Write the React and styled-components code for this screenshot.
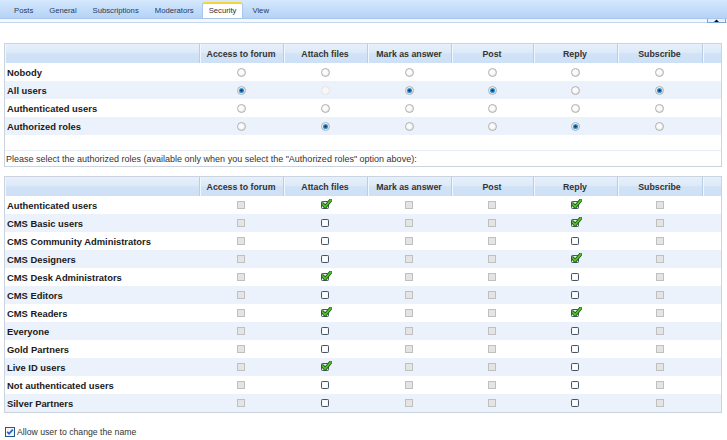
import React from 'react';
import styled, { createGlobalStyle, css } from 'styled-components';

const GlobalStyle = createGlobalStyle`
  html, body {
    margin: 0;
    padding: 0;
    background: #fff;
  }
  body {
    font-family: "Liberation Sans", Arial, sans-serif;
    color: #222;
  }
`;

const TABS = ['Posts', 'General', 'Subscriptions', 'Moderators', 'Security', 'View'];
const COLUMNS = ['Access to forum', 'Attach files', 'Mark as answer', 'Post', 'Reply', 'Subscribe'];
const COL_WIDTHS = [84, 84, 84, 82, 84, 85];

const ACCESS = [
  { name: 'Nobody', values: ['off', 'off', 'off', 'off', 'off', 'off'] },
  { name: 'All users', values: ['on', 'disabled', 'on', 'on', 'off', 'on'] },
  { name: 'Authenticated users', values: ['off', 'off', 'off', 'off', 'off', 'off'] },
  { name: 'Authorized roles', values: ['off', 'on', 'off', 'off', 'on', 'off'] },
];

const ROLES = [
  { name: 'Authenticated users', attach: true, reply: true },
  { name: 'CMS Basic users', attach: false, reply: true },
  { name: 'CMS Community Administrators', attach: false, reply: false },
  { name: 'CMS Designers', attach: false, reply: true },
  { name: 'CMS Desk Administrators', attach: true, reply: false },
  { name: 'CMS Editors', attach: false, reply: false },
  { name: 'CMS Readers', attach: true, reply: true },
  { name: 'Everyone', attach: false, reply: false },
  { name: 'Gold Partners', attach: false, reply: false },
  { name: 'Live ID users', attach: true, reply: false },
  { name: 'Not authenticated users', attach: false, reply: false },
  { name: 'Silver Partners', attach: false, reply: false },
];

const roleStates = role => [
  'disabled',
  role.attach ? 'checked' : 'empty',
  'disabled',
  'disabled',
  role.reply ? 'checked' : 'empty',
  'disabled',
];

const Radio = ({ state }) => {
  if (state === 'disabled') {
    return (
      <IconSvg width="9" height="9" viewBox="0 0 9 9">
        <circle cx="4.5" cy="4.5" r="4" fill="#f7f7f7" stroke="#e5e5e5" />
      </IconSvg>
    );
  }
  return (
    <IconSvg width="9" height="9" viewBox="0 0 9 9">
      <circle cx="4.5" cy="4.5" r="4" fill="#e6e6e6" stroke="#b3b3b3" />
      <circle cx="4.2" cy="4.2" r="2.7" fill="#fbfbfb" />
      {state === 'on' && (
        <>
          <circle cx="4.5" cy="4.5" r="2.6" fill="#3597dc" />
          <circle cx="4.5" cy="4.5" r="1.3" fill="#0c3a68" />
        </>
      )}
    </IconSvg>
  );
};

const Check = ({ state }) => {
  if (state === 'disabled') {
    return (
      <IconSvg width="8" height="8" viewBox="0 0 8 8">
        <rect x="0.5" y="0.5" width="7" height="7" fill="#e4e4e4" stroke="#c0c0c0" />
      </IconSvg>
    );
  }
  if (state === 'empty') {
    return (
      <IconSvg width="8" height="8" viewBox="0 0 8 8">
        <rect x="0.5" y="0.5" width="7" height="7" rx="0.8" fill="#e9ecf0" stroke="#485565" />
        <rect x="1.5" y="1.5" width="5" height="5" fill="#fff" />
      </IconSvg>
    );
  }
  return (
    <IconSvg width="11" height="10" viewBox="0 0 11 10" $shift>
      <rect x="0.5" y="2.5" width="7" height="7" rx="0.8" fill="#e9ecf0" stroke="#485565" />
      <path d="M1.6 5 L4.2 7.8 L9.9 1" fill="none" stroke="#1e5a12" strokeWidth="3.4" strokeLinejoin="round" strokeLinecap="round" />
      <path d="M1.6 5 L4.2 7.8 L9.9 1" fill="none" stroke="#52c52d" strokeWidth="1.7" strokeLinejoin="round" strokeLinecap="round" />
    </IconSvg>
  );
};

const PermissionHead = () => (
  <>
    <colgroup>
      <col style={{ width: 194 }} />
      {COL_WIDTHS.map((w, i) => (
        <col key={i} style={{ width: w }} />
      ))}
      <col />
    </colgroup>
    <thead>
      <tr>
        <HeadCell $first />
        {COLUMNS.map(c => (
          <HeadCell key={c}>{c}</HeadCell>
        ))}
        <HeadCell />
      </tr>
    </thead>
  </>
);

const App = () => {
  return (
    <Page>
      <GlobalStyle />
      <TabBar>
        {TABS.map(tab => (
          <Tab key={tab} $active={tab === 'Security'}>
            {tab}
          </Tab>
        ))}
      </TabBar>
      <TabStrip>
        <ScrollButton>
          <svg width="7" height="4" viewBox="0 0 7 4">
            <path d="M0.5 3.5 L3.5 0.5 L6.5 3.5 Z" fill="#111" />
          </svg>
        </ScrollButton>
      </TabStrip>

      <Content>
        <Panel>
          <Grid>
            <PermissionHead />
            <tbody>
              {ACCESS.map((row, i) => (
                <Row key={row.name} $alt={i % 2 === 1}>
                  <LabelCell>{row.name}</LabelCell>
                  {row.values.map((v, j) => (
                    <Cell key={j}>
                      <Radio state={v} />
                    </Cell>
                  ))}
                  <Cell />
                </Row>
              ))}
              <tr>
                <SpacerCell colSpan={8} />
              </tr>
              <tr>
                <NoteCell colSpan={8}>
                  Please select the authorized roles (available only when you select the "Authorized roles" option above):
                </NoteCell>
              </tr>
            </tbody>
          </Grid>
        </Panel>

        <Panel $gap>
          <Grid>
            <PermissionHead />
            <tbody>
              {ROLES.map((role, i) => (
                <Row key={role.name} $alt={i % 2 === 1}>
                  <LabelCell>{role.name}</LabelCell>
                  {roleStates(role).map((s, j) => (
                    <Cell key={j}>
                      <Check state={s} />
                    </Cell>
                  ))}
                  <Cell />
                </Row>
              ))}
            </tbody>
          </Grid>
        </Panel>

        <AllowRow>
          <svg width="10" height="10" viewBox="0 0 10 10">
            <rect x="0.5" y="0.5" width="9" height="9" fill="#f4f4f1" stroke="#1f5a8f" />
            <path d="M2.2 4.8 L4 6.8 L7.8 2.6" fill="none" stroke="#2a5bc7" strokeWidth="1.6" />
          </svg>
          <AllowLabel>Allow user to change the name</AllowLabel>
        </AllowRow>
      </Content>
    </Page>
  );
};

const Page = styled.div`
  width: 727px;
  min-height: 440px;
  background: #fff;
`;

const TabBar = styled.div`
  display: flex;
  align-items: flex-end;
  height: 18px;
  padding-left: 6px;
  background: linear-gradient(#d6e8fd, #b4d2f7);
`;

const Tab = styled.div`
  height: 15px;
  padding: 0 8px;
  line-height: 15px;
  font-size: 7.7px;
  color: #1f3a60;
  white-space: nowrap;
  box-sizing: border-box;
  ${p =>
    p.$active &&
    css`
      height: 16px;
      margin: 0 1px 0 0;
      padding: 0 6px;
      line-height: 14px;
      color: #333;
      background: #fff;
      border-top: 2px solid #f7d43a;
      border-left: 1px solid #a9c7ea;
      border-right: 1px solid #a9c7ea;
      border-radius: 3px 3px 0 0;
    `}
`;

const TabStrip = styled.div`
  display: flex;
  justify-content: flex-end;
  height: 3px;
  background: #f3f8fe;
  border-top: 1px solid #a8c6ea;
  border-bottom: 1px solid #c4d7ee;
`;

const ScrollButton = styled.div`
  display: flex;
  align-items: center;
  justify-content: center;
  width: 17px;
  height: 3px;
  margin-right: 1px;
  border: 1px solid #77a6da;
  border-top: none;
  background: #e8f1fc;
  overflow: hidden;
`;

const Content = styled.div`
  padding: 20px 5px 0 4px;
`;

const Panel = styled.div`
  border: 1px solid #c9d4e0;
  ${p => p.$gap && 'margin-top: 9px;'}
`;

const Grid = styled.table`
  width: 100%;
  border-collapse: collapse;
  table-layout: fixed;
`;

const HeadCell = styled.th`
  height: 19px;
  padding: 0;
  font-size: 8.8px;
  font-weight: bold;
  color: #333;
  text-align: center;
  white-space: nowrap;
  background: linear-gradient(#e7f0fb 0%, #dde9f8 45%, #d1e2f6 52%, #cde0f5 100%);
  ${p => !p.$first && 'border-left: 1px solid #b9cde5;'}
  box-shadow: inset 1px 0 #f1f7fe;
`;

const Row = styled.tr`
  background: ${p => (p.$alt ? '#ebf2fb' : '#fff')};
`;

const Cell = styled.td`
  height: 18px;
  padding: 0;
  text-align: center;
  vertical-align: middle;
`;

const LabelCell = styled.td`
  height: 18px;
  padding: 0 0 0 2px;
  font-size: 9.4px;
  font-weight: bold;
  color: #1a1a1a;
  white-space: nowrap;
`;

const SpacerCell = styled.td`
  height: 15px;
  padding: 0;
`;

const NoteCell = styled.td`
  height: 15px;
  padding: 0 0 0 1px;
  font-size: 9px;
  color: #333;
  white-space: nowrap;
  border-top: 1px solid #e8edf3;
`;

const IconSvg = styled.svg`
  display: block;
  margin: 0 auto;
  ${p => p.$shift && 'transform: translate(1px, -1px);'}
`;

const AllowRow = styled.div`
  display: flex;
  align-items: center;
  gap: 2px;
  margin-top: 14px;
  padding-left: 1px;
`;

const AllowLabel = styled.span`
  font-size: 8.7px;
  color: #333;
`;

export default App;
